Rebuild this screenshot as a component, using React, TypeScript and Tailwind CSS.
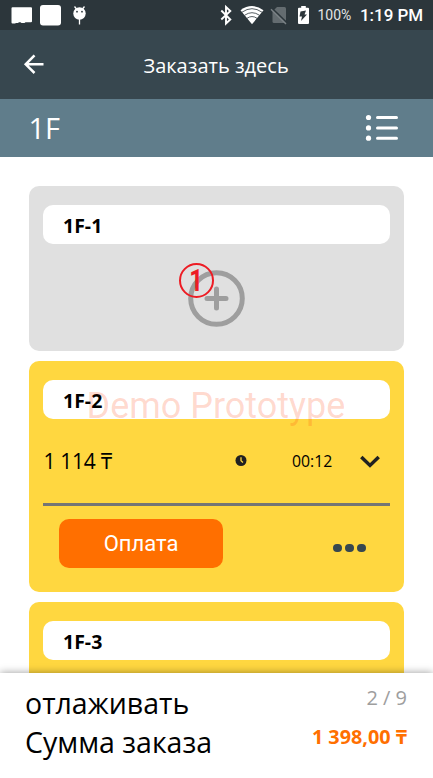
import React from "react";

const sans = "font-['Open_Sans','Noto_Sans',sans-serif]";
const roboto = "font-[Roboto,'Noto_Sans',sans-serif]";

function StatusBar() {
  return (
    <div className={`flex h-[30px] items-center bg-[#2c363b] text-white ${roboto}`}>
      <svg className="block h-[30px] w-[297px] shrink-0" viewBox="0 0 297 30" fill="#fff">
        <path d="M12.500 7.200h18.500a1 1 0 0 1 1 1v13a1 1 0 0 1-1 1h-5.500l-1 .8h-3l-1-.8h-1.500l-1 .8h-2l-1 .4h-2.500a1 1 0 0 1-1-1V8.200a1 1 0 0 1 1-1z" />
        <rect x="40" y="5" width="21" height="20.500" rx="3" />
        <path d="M76.500 9l-2-2.500M82.500 9l2-2.500M79.500 19v5.500" stroke="#fff" strokeWidth="1.300" fill="none" />
        <circle cx="79.500" cy="13.500" r="6.200" />
        <circle cx="77" cy="11.700" r="0.900" fill="#2c363b" />
        <circle cx="82" cy="11.700" r="0.900" fill="#2c363b" />
        <path d="M221.300 10.500l9 9-4.300 4V7l4.300 4-9 8.500" stroke="#fff" strokeWidth="1.900" fill="none" />
        <path d="M240.500 10.200Q252 2 263.500 10.200L252 24.300z" />
        <path d="M242 12.200q10-7 20 0M244.500 15.300q7.500-5.200 15 0M247 18.300q5-3.500 10 0" stroke="#2c363b" strokeWidth="0.800" fill="none" />
        <path d="M277 7h7.500a1.500 1.500 0 0 1 1.500 1.500V21.500a1.500 1.500 0 0 1-1.500 1.500h-10.500a1.500 1.500 0 0 1-1.500-1.500V11.500z" fill="#646c70" />
        <path d="M272.300 8.600l14.500 14" stroke="#2c363b" strokeWidth="1.600" />
        <path d="M271 9.300l15 14.700" stroke="#7b8286" strokeWidth="1.400" />
      </svg>
      <svg className="block h-[30px] w-[13px] shrink-0" viewBox="297 0 13 30">
        <path d="M299 7.700h2.200V6h4.600v1.700H308a1 1 0 0 1 1 1V23a1 1 0 0 1-1 1h-9a1 1 0 0 1-1-1V8.700a1 1 0 0 1 1-1z" fill="#fff" />
        <path d="M306 10.500l-5.500 1-1 5h2.500l-1 4.500 6-6.500h-2.500z" fill="#2c363b" />
      </svg>
      <span className="ml-[7.500px] w-[42.500px] text-[14px] leading-[32px] text-[#e3e5e6]">100%</span>
      <span className="text-[17px] leading-[32px] font-medium tracking-[-0.050px] whitespace-nowrap">1:19 PM</span>
    </div>
  );
}

function Header() {
  return (
    <header className="flex h-[68.500px] items-center bg-[#37474f] text-white">
      <svg className="ml-[23px] block h-[20px] w-[22px]" viewBox="0 0 22 20" fill="none" stroke="#fff" strokeWidth="2.500">
        <path d="M20.500 10.300H3M11.500 1.300L2.700 10.300l8.800 8.700" />
      </svg>
      <h1 className="ml-[98.500px] pt-[3px] text-[20px] leading-[28px] whitespace-nowrap">Заказать здесь</h1>
    </header>
  );
}

function FloorBar() {
  return (
    <div className="flex h-[58.500px] items-center justify-between bg-[#607d8b] pr-[34px] pl-[28.500px] text-white">
      <span className="text-[29px] leading-[40px]">1F</span>
      <svg className="block h-[28px] w-[34px]" viewBox="0 0 34 28" fill="#fff" stroke="#fff" strokeLinecap="round" strokeWidth="3">
        <path d="M12.500 3.500h19M12.500 13.900h19M12.500 24.200h19" />
        <g stroke="none">
          <circle cx="3.500" cy="3.500" r="2.600" />
          <circle cx="3.500" cy="13.900" r="2.600" />
          <circle cx="3.500" cy="24.200" r="2.600" />
        </g>
      </svg>
    </div>
  );
}

function TableName({ children }: { children: React.ReactNode }) {
  return (
    <div className="flex h-[39px] items-center rounded-[10px] bg-white pt-[2px] pl-[20px] text-[19.500px] leading-[27px] font-bold text-black">
      {children}
    </div>
  );
}

function EmptyTable() {
  return (
    <section className="relative h-[165px] shrink-0 rounded-[10px] bg-[#e0e0e0] px-[14px] pt-[19px]">
      <TableName>1F-1</TableName>
      <svg className="mx-auto mt-[25px] block h-[58px] w-[58px]" viewBox="0 0 58 58" fill="none" stroke="#9e9e9e">
        <circle cx="28.500" cy="29.500" r="25.800" strokeWidth="5" />
        <path d="M19 29.500h19M28.500 20v19" strokeWidth="5" strokeLinecap="round" />
      </svg>
      <div className={`absolute top-[77px] left-[150px] flex h-[35px] w-[35px] items-center justify-center rounded-full border-2 border-[#ed1c24] text-[32px] leading-[35px] font-bold text-[#ed1c24] ${roboto}`}>
        <span className="-ml-[1px] scale-x-75">1</span>
      </div>
    </section>
  );
}

function OccupiedTable() {
  return (
    <section className="relative h-[231px] shrink-0 rounded-[10px] bg-[#ffd740] px-[14px] pt-[19px]">
      <TableName>1F-2</TableName>
      <div className="flex h-[87px] items-center border-b-[3px] border-[#757575] text-black">
        <span className="w-[192px] pl-[0.500px] text-[21px] leading-[28px] tracking-[-0.300px] whitespace-nowrap">1 114 ₸</span>
        <svg className="block h-[12px] w-[12px]" viewBox="0 0 12 12">
          <circle cx="6" cy="5.500" r="5.500" fill="#212121" />
          <path d="M6 2.200V5.800l2 1.700" fill="none" stroke="#ffd740" strokeWidth="1.300" />
        </svg>
        <span className="ml-[45px] w-[68px] text-[15.800px] leading-[24px]">00:12</span>
        <svg className="block h-[13px] w-[20px]" viewBox="0 0 20 13" fill="none" stroke="#212121" strokeWidth="3.500">
          <path d="M1.300 2L10 10.400l8.700-8.400" />
        </svg>
      </div>
      <div className="flex items-center justify-between pt-[13px] pr-[24.500px] pl-[16px]">
        <button className={`h-[49px] w-[164px] rounded-[10px] bg-[#ff6f00] text-[22px] leading-[49px] text-white ${roboto}`}>
          Оплата
        </button>
        <div className="mt-[9px] flex gap-[3.500px]">
          <i className="block size-[8.500px] rounded-full bg-[#37474f]" />
          <i className="block size-[8.500px] rounded-full bg-[#37474f]" />
          <i className="block size-[8.500px] rounded-full bg-[#37474f]" />
        </div>
      </div>
      <div className={`pointer-events-none absolute top-[24px] left-[57.500px] text-[36px] leading-[42px] whitespace-nowrap text-[#ff3d00]/20 ${roboto}`}>
        Demo Prototype
      </div>
    </section>
  );
}

function Summary() {
  return (
    <footer className="relative flex h-[105px] shrink-0 justify-between bg-white pr-[26px] pl-[25px] shadow-[0_0_8px_rgba(0,0,0,0.4)]">
      <div className="pt-[11px] text-[28.500px] leading-[39px] whitespace-nowrap text-black">
        <div>отлаживать</div>
        <div>Сумма заказа</div>
      </div>
      <div className="pt-[5px] text-right text-[20px] leading-[39px] whitespace-nowrap">
        <div className="text-[#9e9e9e]">2 / 9</div>
        <div className="text-[19.800px] font-bold text-[#ff6f00]">1 398,00 ₸</div>
      </div>
    </footer>
  );
}

export default function App() {
  return (
    <div className={`flex h-[778px] w-[433px] flex-col overflow-hidden bg-white ${sans}`}>
      <StatusBar />
      <Header />
      <FloorBar />
      <main className="flex h-[516px] shrink-0 flex-col gap-[10px] overflow-hidden px-[29px] pt-[29px]">
        <EmptyTable />
        <OccupiedTable />
        <section className="h-[231px] shrink-0 rounded-[10px] bg-[#ffd740] px-[14px] pt-[19px]">
          <TableName>1F-3</TableName>
        </section>
      </main>
      <Summary />
    </div>
  );
}
